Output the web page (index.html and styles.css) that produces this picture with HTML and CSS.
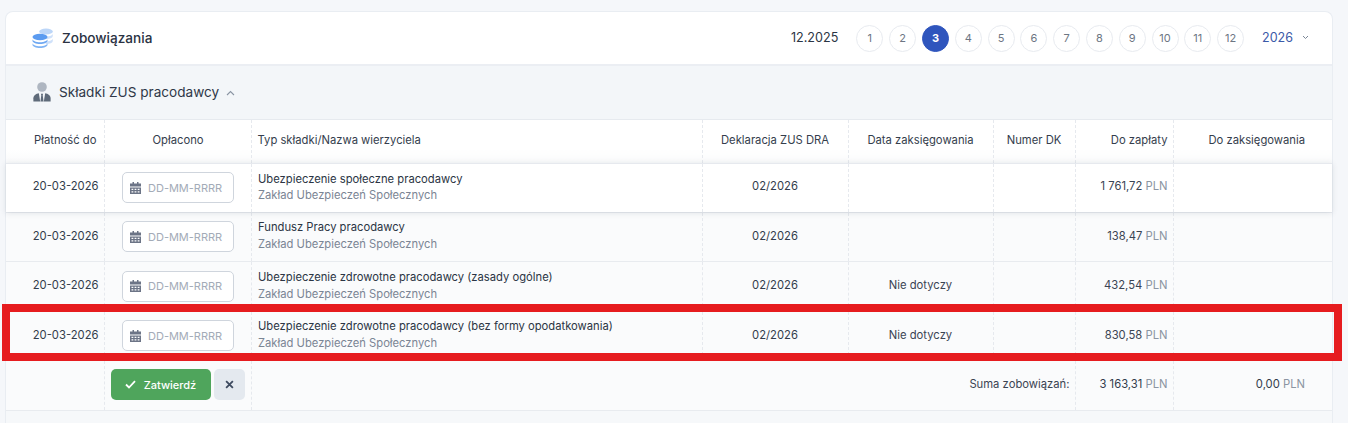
FILE: index.html
```html
<!DOCTYPE html>
<html lang="pl">
<head>
<meta charset="utf-8">
<title>Zobowiązania</title>
<link rel="stylesheet" href="styles.css">
</head>
<body>
<div class="stage">
  <section class="card">
    <header class="top">
      <svg class="coins" width="22" height="22" viewBox="0 0 22 22">
        <ellipse cx="14" cy="4.500" rx="6.800" ry="3" fill="#bcd6f8"/>
        <path d="M7.200 6.500c0 1.700 3 3 6.800 3s6.800-1.300 6.800-3v2.500c0 1.700-3 3-6.800 3s-6.800-1.300-6.800-3z" fill="#cfe1fa"/>
        <path d="M10 11.500c0 1 1.800 3 4 3s6.800-1.300 6.800-3v2.500c0 1.700-3 3-6.800 3z" fill="#cfe1fa"/>
        <ellipse cx="8" cy="10" rx="7.500" ry="3.200" fill="#5b9bf0"/>
        <path d="M.5 12c0 1.800 3.400 3.200 7.500 3.200s7.500-1.400 7.500-3.200v1.800c0 1.800-3.400 3.200-7.500 3.200s-7.500-1.400-7.500-3.200z" fill="#6ea8f2"/>
        <path d="M.5 16c0 1.800 3.400 3.200 7.500 3.200s7.500-1.400 7.500-3.200v1.800c0 1.800-3.400 3.200-7.500 3.200s-7.500-1.400-7.500-3.200z" fill="#7fb3f4"/>
      </svg>
      <h1 class="title">Zobowiązania</h1>
      <div class="period">12.2025</div>
      <nav class="months">
        <a class="month">1</a><a class="month">2</a><a class="month active">3</a><a class="month">4</a><a class="month">5</a><a class="month">6</a><a class="month">7</a><a class="month">8</a><a class="month">9</a><a class="month">10</a><a class="month">11</a><a class="month">12</a>
      </nav>
      <div class="year">2026
        <svg width="7" height="5" viewBox="0 0 7 5"><path d="M1 1l2.500 2.500L6 1" fill="none" stroke="#7b8797" stroke-width="1"/></svg>
      </div>
    </header>
    <div class="section">
      <svg class="person" width="18" height="20" viewBox="0 0 19 22">
        <circle cx="9.500" cy="5.500" r="5.300" fill="#aeb6c1"/>
        <path d="M0 21.500v-3.500c0-3 3-5 6-5.500l1.500 9z" fill="#5f6b7a"/>
        <path d="M19 21.500v-3.500c0-3-3-5-6-5.500l-1.500 9z" fill="#5f6b7a"/>
        <path d="M8.300 13h2.400l-.4 1.500.9 7H7.800l.9-7z" fill="#5f6b7a"/>
      </svg>
      <span class="section-name">Składki ZUS pracodawcy</span>
      <svg class="caret" width="9" height="6" viewBox="0 0 9 6"><path d="M1 5l3.500-3.500L8 5" fill="none" stroke="#8a95a3" stroke-width="1.100"/></svg>
    </div>
    <table class="grid">
      <colgroup>
        <col class="c1"><col class="c2"><col class="c3"><col class="c4"><col class="c5"><col class="c6"><col class="c7"><col class="c8">
      </colgroup>
      <thead>
        <tr>
          <th class="right pay">Płatność do</th>
          <th class="paid">Opłacono</th>
          <th class="left">Typ składki/Nazwa wierzyciela</th>
          <th>Deklaracja ZUS DRA</th>
          <th>Data zaksięgowania</th>
          <th>Numer DK</th>
          <th class="right amount">Do zapłaty</th>
          <th class="booked">Do zaksięgowania</th>
        </tr>
      </thead>
      <tbody>
        <tr class="hot">
          <td class="right date">20-03-2026</td>
          <td class="pick"><div class="picker"><svg class="cal" width="11" height="12" viewBox="0 0 11 12"><path d="M2.500 0h1.500v1.500h3V0h1.500v1.500H11V4.500H0V1.500h2.500zM0 5.500h11V12H0zm1.500 1.200v1.400h1.800V6.700zm3.100 0v1.400h1.800V6.700zm3.100 0v1.400h1.800V6.700zM1.500 9.200v1.400h1.800V9.200zm3.100 0v1.400h1.800V9.200zm3.100 0v1.400h1.800V9.200z" fill="#6c7486" fill-rule="evenodd"/></svg><span>DD-MM-RRRR</span></div></td>
          <td class="left who"><div class="name">Ubezpieczenie społeczne pracodawcy</div><div class="sub">Zakład Ubezpieczeń Społecznych</div></td>
          <td class="strong">02/2026</td>
          <td></td>
          <td></td>
          <td class="right amount">1 761,72 <span class="cur">PLN</span></td>
          <td></td>
        </tr>
        <tr class="short">
          <td class="right date">20-03-2026</td>
          <td class="pick"><div class="picker"><svg class="cal" width="11" height="12" viewBox="0 0 11 12"><path d="M2.500 0h1.500v1.500h3V0h1.500v1.500H11V4.500H0V1.500h2.500zM0 5.500h11V12H0zm1.500 1.200v1.400h1.800V6.700zm3.100 0v1.400h1.800V6.700zm3.100 0v1.400h1.800V6.700zM1.500 9.200v1.400h1.800V9.200zm3.100 0v1.400h1.800V9.200zm3.100 0v1.400h1.800V9.200z" fill="#6c7486" fill-rule="evenodd"/></svg><span>DD-MM-RRRR</span></div></td>
          <td class="left who"><div class="name">Fundusz Pracy pracodawcy</div><div class="sub">Zakład Ubezpieczeń Społecznych</div></td>
          <td class="strong">02/2026</td>
          <td></td>
          <td></td>
          <td class="right amount">138,47 <span class="cur">PLN</span></td>
          <td></td>
        </tr>
        <tr class="tall">
          <td class="right date">20-03-2026</td>
          <td class="pick"><div class="picker"><svg class="cal" width="11" height="12" viewBox="0 0 11 12"><path d="M2.500 0h1.500v1.500h3V0h1.500v1.500H11V4.500H0V1.500h2.500zM0 5.500h11V12H0zm1.500 1.200v1.400h1.800V6.700zm3.100 0v1.400h1.800V6.700zm3.100 0v1.400h1.800V6.700zM1.500 9.200v1.400h1.800V9.200zm3.100 0v1.400h1.800V9.200zm3.100 0v1.400h1.800V9.200z" fill="#6c7486" fill-rule="evenodd"/></svg><span>DD-MM-RRRR</span></div></td>
          <td class="left who"><div class="name">Ubezpieczenie zdrowotne pracodawcy (zasady ogólne)</div><div class="sub">Zakład Ubezpieczeń Społecznych</div></td>
          <td class="strong">02/2026</td>
          <td>Nie dotyczy</td>
          <td></td>
          <td class="right amount">432,54 <span class="cur">PLN</span></td>
          <td></td>
        </tr>
        <tr class="short">
          <td class="right date">20-03-2026</td>
          <td class="pick"><div class="picker"><svg class="cal" width="11" height="12" viewBox="0 0 11 12"><path d="M2.500 0h1.500v1.500h3V0h1.500v1.500H11V4.500H0V1.500h2.500zM0 5.500h11V12H0zm1.500 1.200v1.400h1.800V6.700zm3.100 0v1.400h1.800V6.700zm3.100 0v1.400h1.800V6.700zM1.500 9.200v1.400h1.800V9.200zm3.100 0v1.400h1.800V9.200zm3.100 0v1.400h1.800V9.200z" fill="#6c7486" fill-rule="evenodd"/></svg><span>DD-MM-RRRR</span></div></td>
          <td class="left who"><div class="name">Ubezpieczenie zdrowotne pracodawcy (bez formy opodatkowania)</div><div class="sub">Zakład Ubezpieczeń Społecznych</div></td>
          <td class="strong">02/2026</td>
          <td>Nie dotyczy</td>
          <td></td>
          <td class="right amount">830,58 <span class="cur">PLN</span></td>
          <td></td>
        </tr>
      </tbody>
      <tfoot>
        <tr>
          <td></td>
          <td class="actions"><div class="btns"><button class="ok"><svg width="11" height="9" viewBox="0 0 11 9"><path d="M1 4.500l3 3L10 1.200" fill="none" stroke="#fff" stroke-width="1.800"/></svg>Zatwierdź</button><button class="no"><svg width="9" height="9" viewBox="0 0 8 8"><path d="M1 1l6 6M7 1L1 7" fill="none" stroke="#3d4a5f" stroke-width="1.600"/></svg></button></div></td>
          <td class="sum-label" colspan="4">Suma zobowiązań:</td>
          <td class="right amount strong">3 163,31 <span class="cur">PLN</span></td>
          <td class="right strong pad">0,00 <span class="cur">PLN</span></td>
        </tr>
      </tfoot>
    </table>
    <div class="rest"></div>
  </section>
  <div class="frame"></div>
</div>
</body>
</html>
```
FILE: styles.css
```css
* { box-sizing: border-box; }
html, body { margin: 0; height: 100%; overflow: hidden; }
body { background: #f5f7fa; font-family: Inter, "Liberation Sans", sans-serif; color: #2b3544; font-size: 11.250px; }
.stage { position: relative; height: 423px; padding: 11px 15px 0 5px; }
.card { background: #fff; border-radius: 8px 8px 0 0; border: 1px solid #e9edf2; border-bottom: 0; }
.top { height: 54px; display: flex; align-items: center; padding: 0 23px 0 26px; border-bottom: 2px solid #ebeef3; }
.coins { margin-right: 8px; }
.title { margin: 0; font-size: 13.600px; font-weight: 500; color: #2a3242; flex: 1; }
.period { font-size: 12.600px; font-weight: 400; margin-right: 18px; margin-bottom: 2px; }
.months { display: flex; gap: 5.800px; margin-right: 18px; }
.month { width: 27px; height: 27px; border-radius: 50%; border: 1px solid #e8ebf0; display: flex; align-items: center; justify-content: center; color: #6d7683; font-size: 11px; }
.month.active { background: #2f55bd; border-color: #2f55bd; color: #fff; font-weight: 700; }
.year { color: #3b5aa8; font-size: 12.500px; font-weight: 400; display: flex; align-items: center; gap: 9px; margin-bottom: 2px; }
.section { height: 54px; display: flex; align-items: center; background: #f3f6f9; padding: 0 0 1px 27px; border-bottom: 1px solid #e6eaef; }
.person { margin-right: 8px; }
.section-name { font-size: 13.600px; font-weight: 400; color: #2f3848; margin-right: 7px; }
.caret { margin-top: 2px; }
.grid { width: 100%; border-collapse: collapse; table-layout: fixed; }
.c1 { width: 98px; } .c2 { width: 147px; } .c3 { width: 451px; } .c4 { width: 146px; } .c5 { width: 145px; } .c6 { width: 82px; } .c7 { width: 98px; } .c8 { width: auto; }
th, td { border-right: 1px dashed #e6e9ee; text-align: center; padding: 0 6px; font-weight: 400; }
th:last-child, td:last-child { border-right: 0; }
thead th { height: 43px; color: #353e4d; font-size: 11.250px; font-weight: 400; padding-bottom: 2px; background: linear-gradient(#fff 70%, #f9fafb); border-bottom: 1px solid #e6e9ee; }
th.pay { padding-right: 7px; }
th.paid { padding-left: 7px; }
th.booked { padding-left: 14px; }
tbody td { height: 50px; padding-bottom: 2px; background: #fafbfc; border-bottom: 1px solid #e8ebef; color: #3a4453; }
tbody tr.short td { height: 49px; }
tbody tr.hot td { background: #fff; height: 49px; padding-bottom: 4px; }
tbody tr.hot { box-shadow: 0 1px 6px rgba(60, 70, 90, .14); position: relative; }
.right { text-align: right; }
.left { text-align: left; }
td.date { padding-right: 5px; color: #323c4b; }
.amount { padding-right: 5px; }
.strong { color: #323c4b; font-weight: 400; }
tbody td.pick, tbody tr.hot td.pick { padding-bottom: 0; }
.picker { width: 112px; height: 31px; margin: 0 auto; background: #fff; border: 1px solid #cfd5dd; border-radius: 5px; display: flex; align-items: center; padding-left: 7px; gap: 7.500px; color: #a3abb7; font-size: 11px; }
.name { color: #2b3544; font-size: 11.220px; line-height: 17px; }
.sub { color: #7b8594; font-size: 11.220px; line-height: 17px; }
tbody td.who { padding-bottom: 1px; padding-left: 6.500px; }
tbody tr.hot td.who, tbody tr.tall td.who { padding-bottom: 0; }
tbody tr.hot .name { line-height: 16px; }
.cur { color: #8b95a2; font-weight: 400; }
tfoot td { height: 50px; padding-bottom: 3px; background: #fafbfc; border-bottom: 1px solid #e8ebef; }
tfoot td.actions { text-align: left; padding: 0 0 1px 6px; }
.btns { display: flex; gap: 3px; }
.ok { width: 100px; height: 31px; border: 0; border-radius: 5px; background: #4fa55c; color: #fff; font: 500 11px Inter, "Liberation Sans", sans-serif; display: flex; align-items: center; justify-content: center; gap: 8px; padding: 0; }
.no { width: 31px; height: 31px; border: 0; border-radius: 5px; background: #e4e9ef; display: flex; align-items: center; justify-content: center; padding: 0; }
.sum-label { text-align: right; padding-right: 5px; color: #3a4453; }
td.pad { padding-right: 27px; }
.rest { height: 14px; background: #f6f8fa; }
.frame { position: absolute; left: 2px; top: 304px; width: 1340px; height: 57px; border: 8px solid #e61c1f; pointer-events: none; }
```
